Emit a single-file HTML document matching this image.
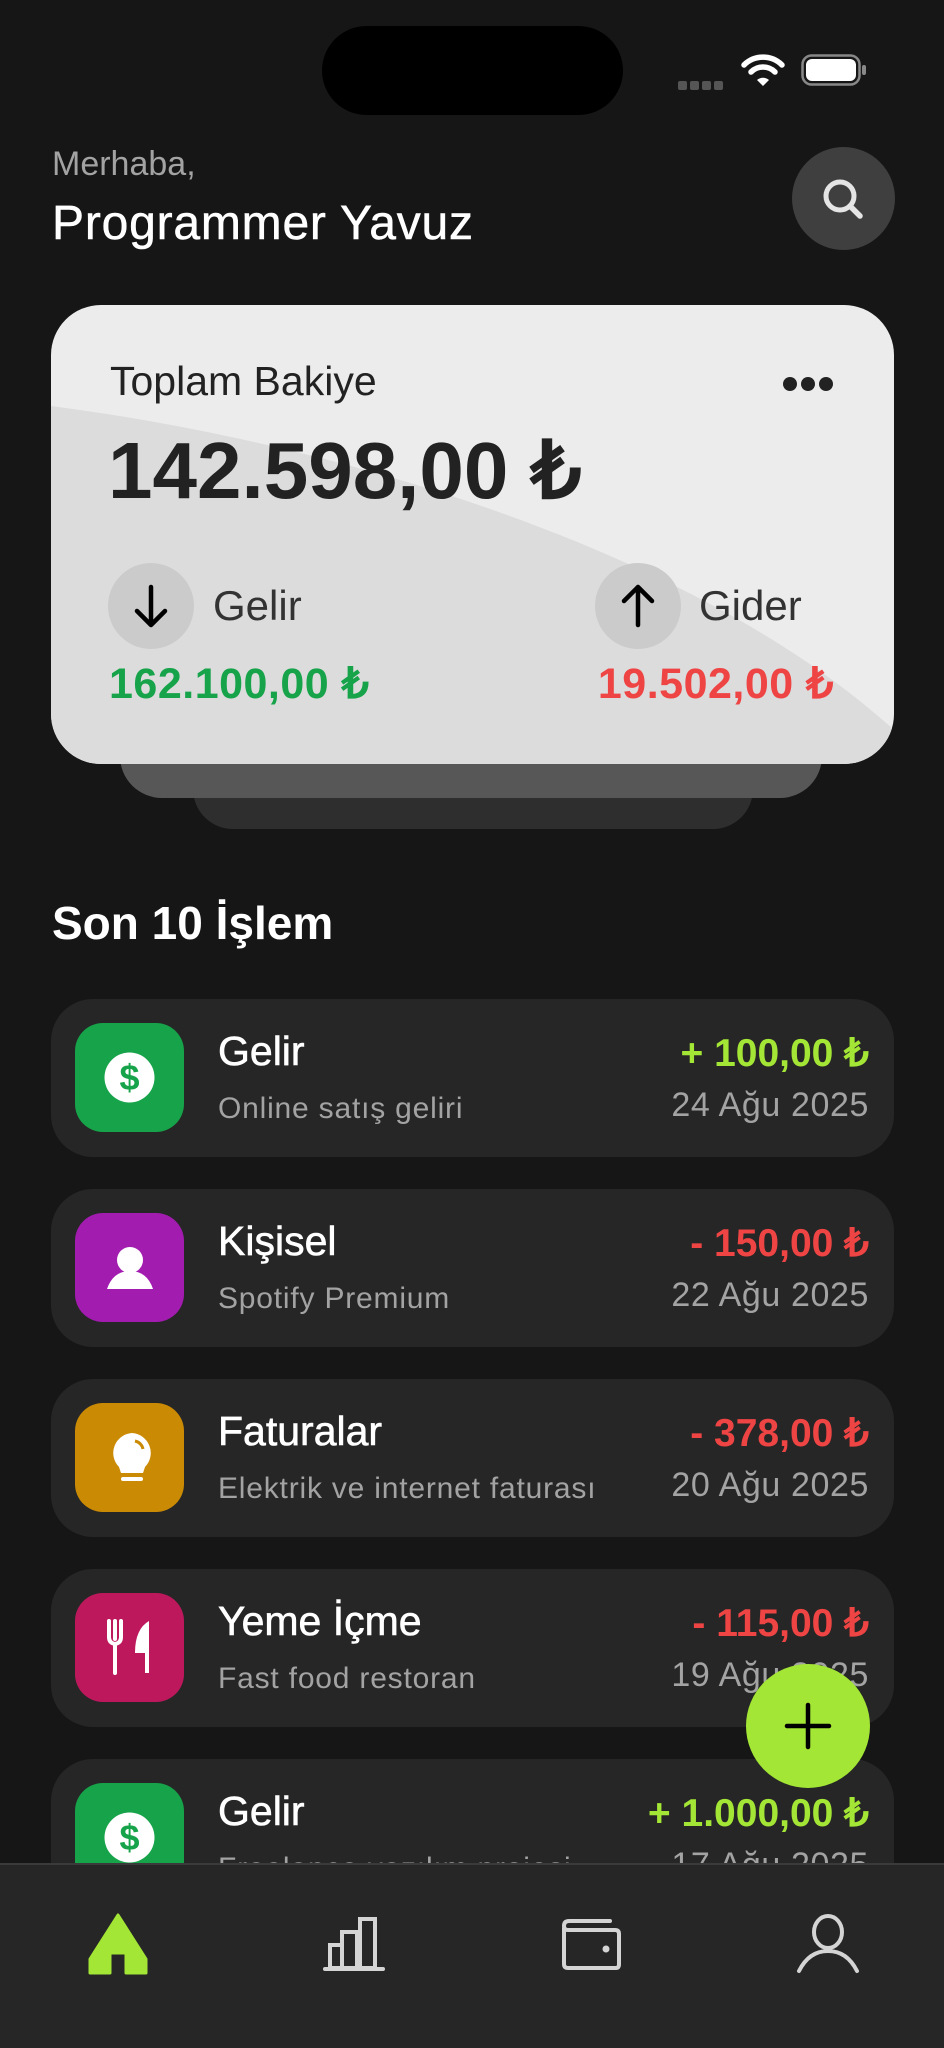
<!DOCTYPE html>
<html><head><meta charset="utf-8"><style>
*{margin:0;padding:0;box-sizing:border-box}
body{width:944px;height:2048px;background:#161616;font-family:"Liberation Sans",sans-serif;position:relative;overflow:hidden;color:#fff}
.a{position:absolute}
.item{position:absolute;left:51px;width:843px;height:158px;background:#262626;border-radius:42px}
.ic{position:absolute;left:24px;top:24px;width:109px;height:109px;border-radius:28px}
.t{position:absolute;left:167px;top:29px;font-size:41px;color:#fff;white-space:nowrap;-webkit-text-stroke:0.6px #fff}
.s{position:absolute;left:167px;top:93px;font-size:30px;color:#a3a3a3;letter-spacing:0.8px;white-space:nowrap}
.m{position:absolute;right:25px;top:32px;font-size:39px;font-weight:bold;white-space:nowrap}
.d{position:absolute;right:25px;top:87px;font-size:34px;color:#a3a3a3;letter-spacing:0.6px;white-space:nowrap}
.g{color:#a3e635}.r{color:#ef4444}
</style></head><body>
<div class="a" style="left:322px;top:26px;width:301px;height:89px;border-radius:45px;background:#000"></div>
<div class="a" style="left:678px;top:77px;width:46px;height:9px;">
<svg width="46" height="9"><g fill="#555"><rect x="0" y="0" width="9" height="9" rx="2"/><rect x="12" y="0" width="9" height="9" rx="2"/><rect x="24" y="0" width="9" height="9" rx="2"/><rect x="36" y="0" width="9" height="9" rx="2"/></g></svg></div>
<svg class="a" style="left:740px;top:52px" width="46" height="36" viewBox="0 0 46 36"><path d="M4 13 A27 27 0 0 1 42 13" stroke="#fff" stroke-width="5.5" fill="none" stroke-linecap="round"/><path d="M11 20 A17 17 0 0 1 35 20" stroke="#fff" stroke-width="5.5" fill="none" stroke-linecap="round"/><path d="M17 28 L23 34 L29 28 A9 9 0 0 0 17 28Z" fill="#fff"/></svg>
<svg class="a" style="left:801px;top:54px" width="66" height="32"><rect x="1.5" y="1.5" width="57" height="29" rx="9" fill="none" stroke="#888" stroke-width="2.5"/><rect x="5" y="5" width="50" height="22" rx="6" fill="#fff"/><rect x="61" y="11" width="4" height="10" rx="2" fill="#888"/></svg>

<div class="a" style="left:52px;top:145px;font-size:34px;color:#a3a3a3">Merhaba,</div>
<div class="a" style="left:52px;top:196px;font-size:48px;color:#fff;letter-spacing:0.8px;-webkit-text-stroke:0.5px #fff">Programmer Yavuz</div>
<div class="a" style="left:792px;top:147px;width:103px;height:103px;border-radius:50%;background:#3f3f3f"></div>
<svg class="a" style="left:818px;top:174px" width="52" height="52" viewBox="0 0 52 52"><circle cx="22" cy="22" r="14" stroke="#e5e5e5" stroke-width="5" fill="none"/><path d="M32 32 L42 42" stroke="#e5e5e5" stroke-width="5.5" stroke-linecap="round"/></svg>

<div class="a" style="left:193px;top:760px;width:560px;height:69px;border-radius:0 0 40px 40px;background:#2e2e2e"></div>
<div class="a" style="left:120px;top:730px;width:702px;height:68px;border-radius:0 0 42px 42px;background:#575757"></div>
<div class="a" style="left:51px;top:305px;width:843px;height:459px;border-radius:50px;overflow:hidden;background:#ececec">
<svg width="843" height="459" style="position:absolute;left:0;top:0"><path d="M0 101 C 300 140, 650 250, 843 425 L843 459 L0 459Z" fill="#dcdcdc"/></svg>
</div>
<div class="a" style="left:110px;top:358px;font-size:41px;color:#222">Toplam Bakiye</div>
<svg class="a" style="left:782px;top:376px" width="52" height="16"><circle cx="8" cy="8" r="7" fill="#222"/><circle cx="26" cy="8" r="7" fill="#222"/><circle cx="44" cy="8" r="7" fill="#222"/></svg>
<div class="a" style="left:108px;top:424px;font-size:80px;font-weight:bold;color:#222">142.598,00 ₺</div>
<div class="a" style="left:108px;top:563px;width:86px;height:86px;border-radius:50%;background:#cbcbcb"></div>
<svg class="a" style="left:126px;top:581px" width="50" height="50" viewBox="0 0 50 50"><path d="M25 6 V44 M11 30 L25 44 L39 30" stroke="#000" stroke-width="4.5" fill="none" stroke-linecap="round" stroke-linejoin="round"/></svg>
<div class="a" style="left:213px;top:582px;font-size:42px;color:#333">Gelir</div>
<div class="a" style="left:595px;top:563px;width:86px;height:86px;border-radius:50%;background:#cbcbcb"></div>
<svg class="a" style="left:613px;top:581px" width="50" height="50" viewBox="0 0 50 50"><path d="M25 44 V6 M11 20 L25 6 L39 20" stroke="#000" stroke-width="4.5" fill="none" stroke-linecap="round" stroke-linejoin="round"/></svg>
<div class="a" style="left:699px;top:582px;font-size:42px;color:#333">Gider</div>
<div class="a" style="left:109px;top:659px;font-size:43px;font-weight:bold;color:#16a34a;letter-spacing:0.5px">162.100,00 ₺</div>
<div class="a" style="right:110px;top:659px;font-size:43px;font-weight:bold;color:#ef4444;letter-spacing:0.5px">19.502,00 ₺</div>

<div class="a" style="left:52px;top:896px;font-size:46px;font-weight:bold;color:#fff">Son 10 İşlem</div>

<div class="item" style="top:999px"><div class="ic" style="background:#16a34a"></div>
<svg class="a" style="left:51px;top:51px" width="55" height="55" viewBox="0 0 55 55"><circle cx="27.5" cy="27.5" r="25" fill="#fff"/><text x="27.5" y="40" font-family="Liberation Sans" font-weight="bold" font-size="36" fill="#16a34a" text-anchor="middle">$</text></svg>
<div class="t">Gelir</div><div class="s">Online satış geliri</div><div class="m g">+ 100,00 ₺</div><div class="d">24 Ağu 2025</div></div>

<div class="item" style="top:1189px"><div class="ic" style="background:#a21caf"></div>
<svg class="a" style="left:52px;top:52px" width="54" height="54" viewBox="0 0 54 54"><circle cx="27" cy="19" r="13" fill="#fff"/><path d="M4 48 Q10 30 27 30 Q44 30 50 48Z" fill="#fff"/></svg>
<div class="t">Kişisel</div><div class="s">Spotify Premium</div><div class="m r">- 150,00 ₺</div><div class="d">22 Ağu 2025</div></div>

<div class="item" style="top:1379px"><div class="ic" style="background:#ca8a04"></div>
<svg class="a" style="left:56px;top:50px" width="50" height="60" viewBox="0 0 50 60"><path d="M25 4 A20 20 0 0 1 38 38 L36 44 H14 L12 38 A20 20 0 0 1 25 4Z" fill="#fff"/><rect x="14" y="48" width="22" height="4" rx="2" fill="#fff"/><path d="M28 12 A10 10 0 0 1 36 20" stroke="#ca8a04" stroke-width="3" fill="none"/></svg>
<div class="t">Faturalar</div><div class="s">Elektrik ve internet faturası</div><div class="m r">- 378,00 ₺</div><div class="d">20 Ağu 2025</div></div>

<div class="item" style="top:1569px"><div class="ic" style="background:#be185d"></div>
<svg class="a" style="left:54px;top:50px" width="50" height="56" viewBox="0 0 50 56"><path d="M4 2 V18 Q4 24 10 25 V54 M16 2 V18 Q16 24 10 25 M10 2 V20" stroke="#fff" stroke-width="4" fill="none" stroke-linecap="round"/><path d="M44 2 Q30 10 30 34 H40 V54 H44Z" fill="#fff"/></svg>
<div class="t">Yeme İçme</div><div class="s">Fast food restoran</div><div class="m r">- 115,00 ₺</div><div class="d">19 Ağu 2025</div></div>

<div class="item" style="top:1759px"><div class="ic" style="background:#16a34a"></div>
<svg class="a" style="left:51px;top:51px" width="55" height="55" viewBox="0 0 55 55"><circle cx="27.5" cy="27.5" r="25" fill="#fff"/><text x="27.5" y="40" font-family="Liberation Sans" font-weight="bold" font-size="36" fill="#16a34a" text-anchor="middle">$</text></svg>
<div class="t">Gelir</div><div class="s">Freelance yazılım projesi</div><div class="m g">+ 1.000,00 ₺</div><div class="d">17 Ağu 2025</div></div>

<div class="a" style="left:746px;top:1664px;width:124px;height:124px;border-radius:50%;background:#a3e635"></div>
<svg class="a" style="left:783px;top:1701px" width="50" height="50"><path d="M25 4 V46 M4 25 H46" stroke="#000" stroke-width="4.5" stroke-linecap="round"/></svg>

<div class="a" style="left:0;top:1863px;width:944px;height:185px;background:#262626;border-top:2px solid #3a3a3a"></div>
<svg class="a" style="left:88px;top:1913px" width="60" height="62" viewBox="0 0 60 62"><path d="M30 2 L58 46 V60 H38 V40 H22 V60 H2 V46Z" fill="#a3e635" stroke="#a3e635" stroke-width="3" stroke-linejoin="round"/></svg>
<svg class="a" style="left:322px;top:1915px" width="64" height="58" viewBox="0 0 64 58"><g fill="none" stroke="#d4d4d4" stroke-width="4"><rect x="8" y="30" width="12" height="23"/><rect x="20" y="17" width="15" height="36"/><rect x="38" y="4" width="15" height="49"/><path d="M3 54 H61" stroke-linecap="round"/></g></svg>
<svg class="a" style="left:561px;top:1916px" width="62" height="56" viewBox="0 0 62 56"><g fill="none" stroke="#d4d4d4" stroke-width="4"><path d="M3 12 V48 Q3 52 7 52 H55 Q58 52 58 48 V18 Q58 14 54 14 H7 Q3 14 3 10 Q3 5 8 5 H49" stroke-linecap="round"/></g><circle cx="45" cy="33" r="3.5" fill="#d4d4d4"/></svg>
<svg class="a" style="left:795px;top:1913px" width="66" height="62" viewBox="0 0 66 62"><g fill="none" stroke="#d4d4d4" stroke-width="4" stroke-linecap="round"><ellipse cx="33" cy="19" rx="14" ry="16"/><path d="M4 58 Q14 38 33 38 Q52 38 62 58"/></g></svg>
</body></html>
